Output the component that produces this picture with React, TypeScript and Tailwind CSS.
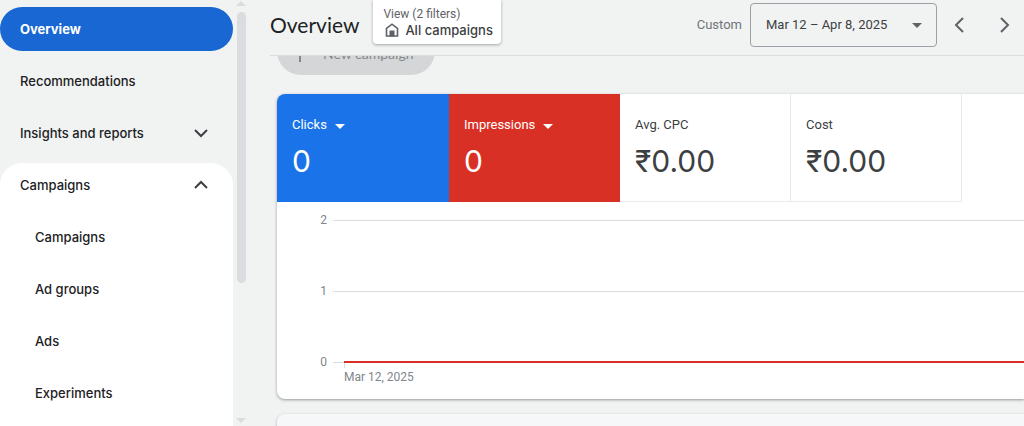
import type { ReactNode } from "react";

const display = "font-['Lato','Liberation_Sans',sans-serif]";

function Chevron({ points, className = "" }: { points: string; className?: string }) {
  return (
    <svg viewBox="0 0 24 24" className={`size-6 ${className}`} fill="none" stroke="currentColor" strokeWidth="2" aria-hidden="true">
      <polyline points={points} />
    </svg>
  );
}

function Caret({ className = "" }: { className?: string }) {
  return (
    <svg viewBox="0 0 10 5" className={`h-[5px] w-[10px] shrink-0 ${className}`} fill="currentColor" aria-hidden="true">
      <path d="M0 0h10L5 5z" />
    </svg>
  );
}

function NavLink({ children, active = false, nested = false }: { children: ReactNode; active?: boolean; nested?: boolean }) {
  return (
    <a
      href="#"
      aria-current={active ? "page" : undefined}
      className={`flex h-11 items-center rounded-full pt-0.5 ${nested ? "pl-[35px]" : "pl-5"} ${active ? "bg-[#1967d2] font-bold text-white" : ""}`}
    >
      {children}
    </a>
  );
}

function NavToggle({ children, open }: { children: ReactNode; open: boolean }) {
  return (
    <button type="button" aria-expanded={open} className="flex h-11 w-full items-center justify-between pt-0.5 pr-5 pl-5 text-left">
      {children}
      <Chevron points={open ? "6,14 12,8 18,14" : "6,8 12,14 18,8"} className="text-[#3c4043]" />
    </button>
  );
}

function Sidebar() {
  return (
    <aside className="flex h-full w-[247px] shrink-0">
      <nav aria-label="Main" className="flex h-full w-[233px] flex-col gap-2 overflow-hidden pt-[7px] font-['Inter','Liberation_Sans',sans-serif] text-[13px] font-medium text-[#202124]">
        <NavLink active>Overview</NavLink>
        <NavLink>Recommendations</NavLink>
        <NavToggle open={false}>Insights and reports</NavToggle>
        <div className="flex flex-1 shrink-0 flex-col gap-2 rounded-t-[22px] bg-white">
          <NavToggle open>Campaigns</NavToggle>
          <NavLink nested>Campaigns</NavLink>
          <NavLink nested>Ad groups</NavLink>
          <NavLink nested>Ads</NavLink>
          <NavLink nested>Experiments</NavLink>
        </div>
      </nav>
      <div className="flex h-full flex-col items-center pt-px pb-[3px] pl-[3px] text-[#dadce0]" aria-hidden="true">
        <Caret className="rotate-180" />
        <div className="mt-1.5 h-[271px] w-[9px] shrink-0 rounded-full bg-[#dadce0]" />
        <Caret className="mt-auto" />
      </div>
    </aside>
  );
}

function Header() {
  return (
    <header className="ml-[23px] flex h-14 shrink-0 border-b border-[#dadce0]">
      <h1 className={`${display} flex h-[50px] items-center text-[21px] text-[#202124]`}>Overview</h1>
      <button type="button" className="ml-3.5 flex h-11 flex-col justify-center rounded-b bg-white pr-2 pl-2.5 text-left shadow-[0_1px_3px_rgba(60,64,67,0.45)]">
        <span className="text-[12px] leading-4 text-[#5f6368]">View (2 filters)</span>
        <span className="flex items-center gap-1.5 pl-0.5 font-['Inter','Liberation_Sans',sans-serif] text-[13px] leading-4 font-medium text-[#3c4043]">
          <svg viewBox="0 0 14 14" className="size-3.5" aria-hidden="true">
            <path d="M1.5 13V5.4L7 1.2l5.5 4.2V13z" fill="none" stroke="#5f6368" strokeWidth="1.6" />
            <path d="M4.5 13.5V7.5h5v6z" fill="#5f6368" />
          </svg>
          All campaigns
        </span>
      </button>
      <div className="ml-auto flex h-[50px] items-center pr-2">
        <label htmlFor="range" className="text-[13px] text-[#70757a]">Custom</label>
        <div className="relative ml-2">
          <select id="range" className="h-11 w-[187px] appearance-none rounded border border-[#9aa0a6] bg-transparent pl-[15px] text-[13px] text-[#3c4043]">
            <option>Mar 12 – Apr 8, 2025</option>
          </select>
          <Caret className="pointer-events-none absolute top-5 right-[15px] text-[#5f6368]" />
        </div>
        <button type="button" aria-label="Previous period" className="ml-[11px] text-[#5f6368]">
          <Chevron points="15,5 8,12 15,19" />
        </button>
        <button type="button" aria-label="Next period" className="ml-5 text-[#5f6368]">
          <Chevron points="9,5 16,12 9,19" />
        </button>
      </div>
    </header>
  );
}

function Metric({ label, value, tone }: { label: string; value: string; tone?: "blue" | "red" }) {
  const look =
    tone === "blue"
      ? "w-[172px] bg-[#1a73e8] text-white border-[#1a73e8]"
      : tone === "red"
        ? "w-[171px] bg-[#d93025] text-white border-[#d93025]"
        : "w-[171px] text-[#3c4043] border-[#e8eaed]";
  return (
    <div className={`h-[108px] shrink-0 border-r border-b pt-5 pl-[15px] ${look}`}>
      <div className="flex h-[22px] items-center gap-2 text-[13px]">
        {tone ? (
          <>
            <select aria-label={`${label} metric`} className="field-sizing-content appearance-none bg-transparent">
              <option>{label}</option>
            </select>
            <Caret className="mt-0.5" />
          </>
        ) : (
          label
        )}
      </div>
      <div className="pt-1.5 font-['Inter','Liberation_Sans',sans-serif] text-[30px] leading-[38px]">{value}</div>
    </div>
  );
}

function Chart() {
  return (
    <svg className="h-[197px] w-full font-['Roboto',sans-serif] text-[12px]" role="img" aria-label="Clicks and impressions over time">
      {[
        { value: 2, y: 18 },
        { value: 1, y: 89 },
        { value: 0, y: 160 },
      ].map(({ value, y }) => (
        <g key={value}>
          <text x="50" y={y + 4} textAnchor="end" fill="#80868b">{value}</text>
          <rect x="56" y={y} width="100%" height="1" fill="#dadce0" />
        </g>
      ))}
      <rect x="67" y="160" width="1" height="6" fill="#dadce0" />
      <rect x="67" y="159" width="100%" height="2" fill="#d93025" />
      <text x="67" y="179" fill="#80868b">Mar 12, 2025</text>
    </svg>
  );
}

export default function App() {
  return (
    <div className="flex h-screen overflow-hidden bg-[#f1f3f2] font-['Roboto','Liberation_Sans',sans-serif]">
      <Sidebar />
      <div className="flex min-w-0 flex-1 flex-col">
        <Header />
        <main className="min-h-0 flex-1 overflow-hidden pl-[30px]">
          <button type="button" disabled className={`-mt-[29px] flex h-12 w-[158px] items-center gap-4 rounded-full bg-[#d4d6d7] pt-1 pl-4 ${display} text-[14px] text-[#85888b]`}>
            <svg viewBox="0 0 14 14" className="mt-1 size-3.5" stroke="currentColor" strokeWidth="2" aria-hidden="true">
              <path d="M7 0v14M0 7h14" />
            </svg>
            New campaign
          </button>
          <section className="mt-[19px] overflow-hidden rounded-l-lg bg-white shadow-[0_1px_3px_rgba(60,64,67,0.5)]">
            <div className="flex">
              <Metric label="Clicks" value="0" tone="blue" />
              <Metric label="Impressions" value="0" tone="red" />
              <Metric label="Avg. CPC" value="₹0.00" />
              <Metric label="Cost" value="₹0.00" />
            </div>
            <Chart />
          </section>
          <section className="mt-[15px] h-16 rounded-l-lg bg-[#f6f7f9] shadow-[0_1px_3px_rgba(60,64,67,0.4)]" />
        </main>
      </div>
    </div>
  );
}
